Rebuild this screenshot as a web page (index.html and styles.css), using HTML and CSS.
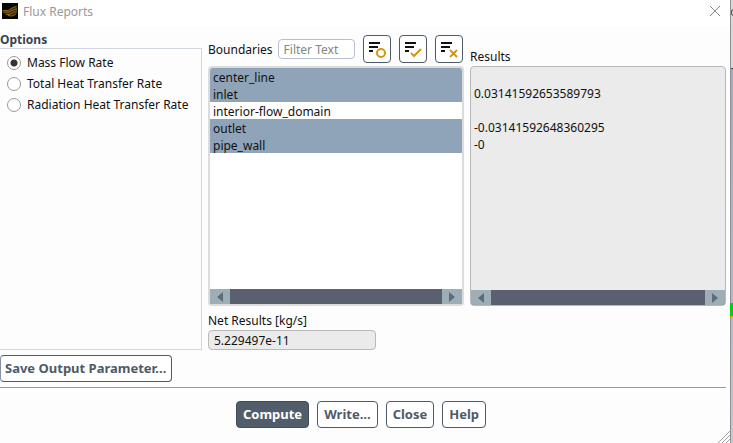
FILE: index.html
```html
<!DOCTYPE html>
<html lang="en">
<head>
<meta charset="utf-8">
<title>Flux Reports</title>
<link rel="stylesheet" href="styles.css">
</head>
<body>
<div class="screen">
  <main class="dialog">
    <header class="titlebar">
      <svg class="app-icon" viewBox="0 0 16 16" aria-hidden="true">
        <rect width="16" height="16" fill="#080604"/>
        <path d="M0.500 8C3 6.500 5 8 7 7C8 4 11 3.500 14.500 3.500C15.500 6 15.500 10 13 12C9 13.500 6 12.500 4 11.500C2.500 10.500 1 9.500 0.500 8Z" fill="#3a2808"/>
        <g fill="none" stroke="#b07c1e" stroke-width="0.800">
          <path d="M0.500 8C3 6.500 5 8.500 7.500 7S10 4.500 14.500 3.500"/>
          <path d="M1.500 9.500C4 8.500 6 10 8.500 8.500S11 6.500 15 6"/>
          <path d="M4 11.500C7 12 9 11 10 10S13 9 15 8.500"/>
          <path d="M6 12.500C10 13.500 12.500 13 14 10.500"/>
        </g>
      </svg>
      <h1 class="title">Flux Reports</h1>
      <button class="close" aria-label="Close window">
        <svg viewBox="0 0 12 12" width="12" height="12"><path d="M1 1L11 11M11 1L1 11" fill="none" stroke="#8a8a8a"/></svg>
      </button>
    </header>

    <div class="content">
      <section class="options">
        <h2 class="options-title" id="options-title">Options</h2>
        <div class="options-box" role="radiogroup" aria-labelledby="options-title">
          <label class="option"><input type="radio" name="report" checked>Mass Flow Rate</label>
          <label class="option"><input type="radio" name="report">Total Heat Transfer Rate</label>
          <label class="option"><input type="radio" name="report">Radiation Heat Transfer Rate</label>
        </div>
      </section>

      <section class="boundaries">
        <div class="toolbar">
          <div class="filter-group">
            <label for="boundary-list">Boundaries</label>
            <input class="filter" type="text" placeholder="Filter Text" aria-label="Filter boundaries">
          </div>
          <button class="tool" aria-label="Toggle selection">
            <svg viewBox="0 0 26 26"><path d="M5 7H16M5 11H14M5 15H9" stroke="#111" stroke-width="2"/><circle cx="17" cy="17" r="4" fill="none" stroke="#d4960f" stroke-width="2"/></svg>
          </button>
          <button class="tool" aria-label="Select all">
            <svg viewBox="0 0 26 26"><path d="M5 7H16M5 11H14M5 15H9" stroke="#111" stroke-width="2"/><path d="M11 17L14 20L21 13" fill="none" stroke="#d4960f" stroke-width="2"/></svg>
          </button>
          <button class="tool" aria-label="Deselect all">
            <svg viewBox="0 0 26 26"><path d="M5 7H16M5 11H14M5 15H9" stroke="#111" stroke-width="2"/><path d="M14 14L21 21M21 14L14 21" fill="none" stroke="#d4960f" stroke-width="2"/></svg>
          </button>
        </div>
        <div class="panel list-panel">
          <select class="list" id="boundary-list" multiple size="5">
            <option selected>center_line</option>
            <option selected>inlet</option>
            <option>interior-flow_domain</option>
            <option selected>outlet</option>
            <option selected>pipe_wall</option>
          </select>
          <div class="scrollbar">
            <button class="arrow" aria-label="Scroll boundaries left"><svg viewBox="0 0 6 10"><path d="M6 0V10L0 5Z"/></svg></button>
            <button class="arrow" aria-label="Scroll boundaries right"><svg viewBox="0 0 6 10"><path d="M0 0V10L6 5Z"/></svg></button>
          </div>
        </div>
        <label class="net-label" for="net">Net Results [kg/s]</label>
        <input class="net" id="net" type="text" value="5.229497e-11" readonly>
      </section>

      <section class="results">
        <label class="results-label" for="results">Results</label>
        <div class="panel results-panel">
          <textarea class="values" id="results" readonly>

0.03141592653589793

-0.03141592648360295
-0</textarea>
          <div class="scrollbar">
            <button class="arrow" aria-label="Scroll results left"><svg viewBox="0 0 6 10"><path d="M6 0V10L0 5Z"/></svg></button>
            <button class="arrow" aria-label="Scroll results right"><svg viewBox="0 0 6 10"><path d="M0 0V10L6 5Z"/></svg></button>
          </div>
        </div>
      </section>
    </div>

    <div class="save-row"><button class="button save">Save Output Parameter...</button></div>

    <footer class="actions">
      <button class="button primary">Compute</button>
      <button class="button">Write...</button>
      <button class="button">Close</button>
      <button class="button">Help</button>
    </footer>
    <svg class="grip" viewBox="0 0 12 12" aria-hidden="true"><path d="M0 12L12 0M4 12L12 4M8 12L12 8" stroke="#a0a0a0" fill="none"/></svg>
  </main>
  <div class="backdrop" aria-hidden="true">
    <div class="backdrop-top"><svg class="backdrop-mark" viewBox="0 0 2 7"><path d="M2 0.500C0 1 0 6 2 6.500" fill="none" stroke="#222"/></svg></div>
    <div class="backdrop-view"></div>
    <div class="backdrop-model"></div>
    <div class="backdrop-view"></div>
  </div>
</div>
</body>
</html>
```
FILE: styles.css
```css
* { box-sizing: border-box; }

body {
  margin: 0;
  color: #111;
  font: 12px/17px "Noto Sans", "Open Sans", sans-serif;
}

button, input, select, textarea { font: inherit; color: inherit; margin: 0; }

.screen { display: flex; min-height: 100vh; }

.dialog {
  position: relative;
  flex: 1;
  display: flex;
  flex-direction: column;
  background: #fdfdfd;
}

.titlebar {
  display: flex;
  align-items: center;
  gap: 5px;
  height: 26px;
  padding: 0 9px 4px 2px;
  background: #fff;
}
.app-icon { width: 16px; height: 16px; }
.title { flex: 1; margin: 0; font-size: 12px; font-weight: 400; color: #999; }
.close { display: flex; padding: 0; border: 0; background: none; }

.content {
  flex: 1;
  display: grid;
  grid-template-columns: 202px 1fr 1fr;
  column-gap: 6px;
  padding-right: 4px;
}

.options { display: flex; flex-direction: column; padding-top: 5px; }
.options-title { margin: 0; font-size: 12px; line-height: 17px; font-weight: 700; color: #3a4351; }
.options-box {
  flex: 1;
  display: flex;
  flex-direction: column;
  padding: 3px 0 0 7px;
  border: 1px solid #d0d7e3;
  border-left: 0;
}
.option { display: flex; align-items: center; gap: 6px; height: 21px; white-space: nowrap; }
.option input {
  appearance: none;
  width: 14px;
  height: 14px;
  border: 1px solid #999;
  border-radius: 50%;
  background: #fff;
}
.option input:checked { background: radial-gradient(circle, #333 3px, #fff 4px); }

.boundaries, .results { display: flex; flex-direction: column; min-width: 0; }

.toolbar { display: flex; align-items: center; gap: 8px; height: 40px; padding: 9px 1px 3px 0; }
.filter-group { flex: 1; display: flex; align-items: center; gap: 5px; min-width: 0; }
.filter {
  flex: 1;
  min-width: 0;
  height: 20px;
  padding: 0 5px;
  border: 1px solid #b5bfd0;
  border-radius: 4px;
  background: #fff;
}
.filter::placeholder { color: #858585; }
.tool {
  flex: none;
  width: 28px;
  height: 28px;
  padding: 0;
  border: 1px solid #4e5a69;
  border-radius: 4px;
  background: #fff;
}
.tool svg { display: block; width: 26px; height: 26px; }

.panel { display: flex; flex-direction: column; overflow: hidden; border-radius: 4px; }
.list-panel { flex: 1; border: 2px solid #dcdcdc; background: #fff; }
.list {
  flex: 1;
  width: 100%;
  padding: 0;
  border: 0;
  outline: 0;
  overflow: hidden;
  background: #fff;
}
.list option { height: 17px; min-height: 17px; padding: 1px 3px 0; line-height: 17px; color: #111; }
.list option:checked { background: linear-gradient(#8fa4b9, #8fa4b9); color: #111; }

.scrollbar { display: flex; justify-content: space-between; height: 15px; background: #5b6070; }
.arrow {
  display: flex;
  align-items: center;
  justify-content: center;
  width: 20px;
  padding: 0;
  border: 0;
  background: #9eaeb7;
}
.arrow svg { width: 6px; height: 10px; fill: #5f6b76; }

.net-label { padding: 6px 0 1px; }
.net {
  width: 168px;
  height: 20px;
  padding: 0 5px;
  border: 1px solid #b9b9b9;
  border-radius: 4px;
  background: #ebebeb;
}

.results-label { height: 40px; padding-top: 22px; }
.results-panel { flex: 1; margin-bottom: 44px; border: 1px solid #b9b9b9; background: #ebebeb; }
.values {
  flex: 1;
  padding: 1px 3px;
  border: 0;
  outline: 0;
  resize: none;
  overflow: hidden;
  background: none;
}

.save-row { margin-right: 4px; padding: 5px 0; border-bottom: 1px solid #999; }
.button {
  height: 27px;
  padding: 0 6px;
  border: 1px solid #4e5a69;
  border-radius: 4px;
  background: #fff;
  color: #4e5a69;
  font-size: 13px;
  font-weight: 700;
}
.save { display: block; padding: 0 5px 0 4px; border-left-color: #8992a0; }
.primary { background: #525d6b; border-color: #414b59; color: #fff; }
.actions { display: flex; justify-content: center; gap: 8px; padding: 13px 8px 15px 0; }

.grip { position: absolute; right: 0; bottom: 0; width: 12px; height: 12px; }

.backdrop {
  display: flex;
  flex-direction: column;
  width: 3px;
  border-left: 1px solid #8f8f96;
}
.backdrop-top { height: 69px; padding-top: 9px; border-bottom: 1px solid #444; background: #d8d8d8; }
.backdrop-mark { display: block; width: 2px; height: 7px; }
.backdrop-view { flex: 234; background: linear-gradient(#a4aabc, #b7bac5); }
.backdrop-model { height: 14px; margin-left: -1px; border-bottom: 1px solid #c0b000; background: #00d010; }
.backdrop-view:last-child { flex: 126; background: linear-gradient(#b7bac5, #c8c8cc); }
```
